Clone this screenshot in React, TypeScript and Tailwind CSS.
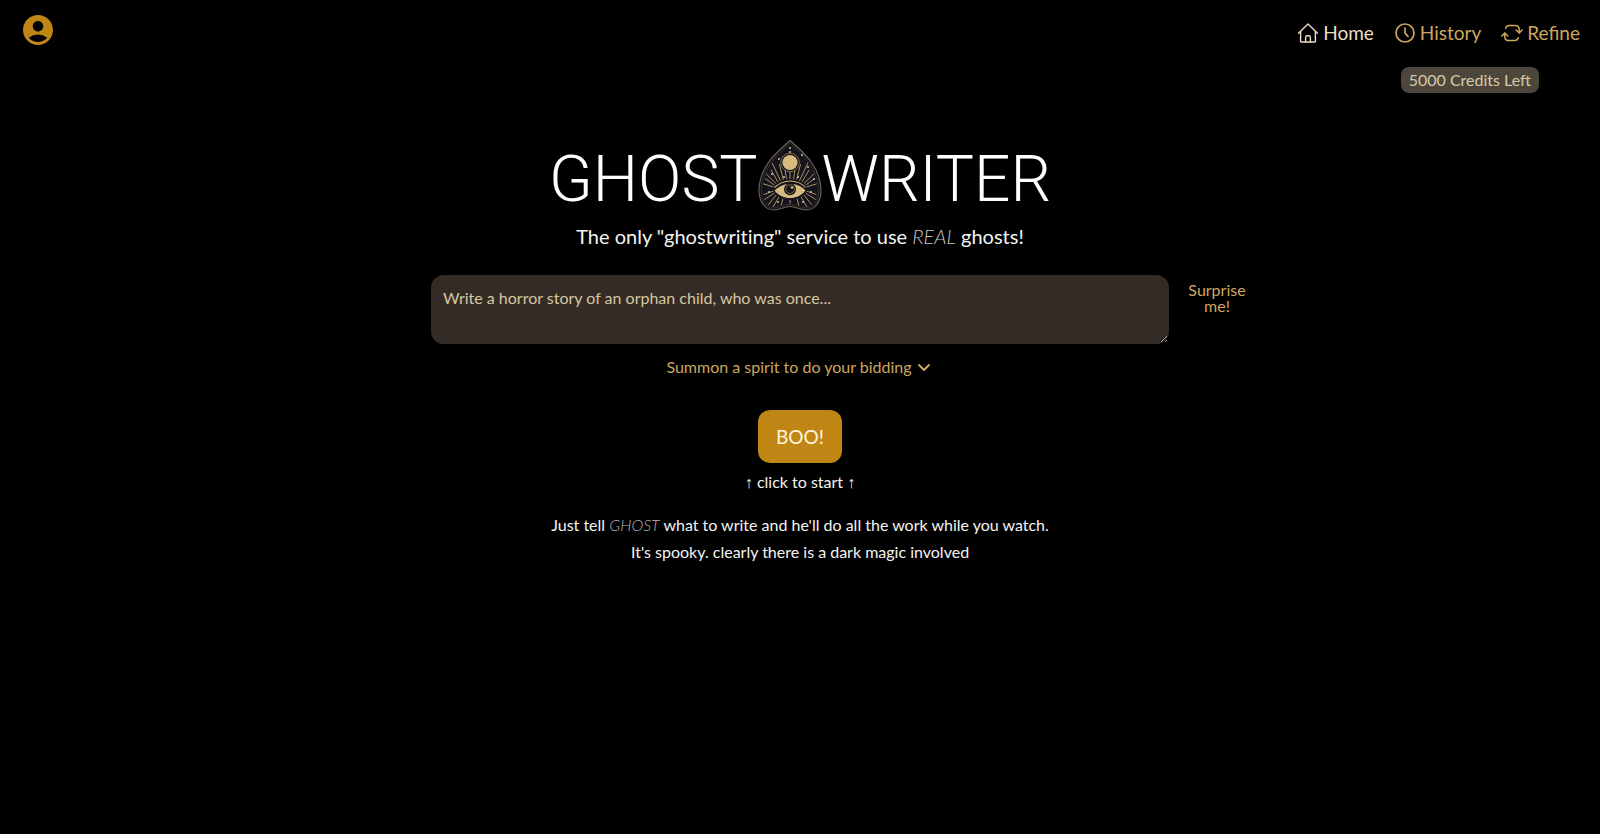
import React from 'react';
import { MdAccountCircle } from 'react-icons/md';

function HomeIcon() {
  return (
    <svg viewBox="0 0 22 22" className="size-[22px]" fill="none" stroke="currentColor" strokeWidth="1.4" strokeLinejoin="round" strokeLinecap="round" aria-hidden="true">
      <path d="M1.5 11.2 11 2l9.5 9.2" />
      <path d="M3.6 9.4v9.8q0 .8.8.8h13.2q.8 0 .8-.8V9.4" />
      <path d="M8.6 20v-4.6q0-1.6 1.6-1.6h1.6q1.6 0 1.6 1.6V20" />
    </svg>
  );
}

function HistoryIcon() {
  return (
    <svg viewBox="0 0 22 22" className="size-[22px]" fill="none" stroke="currentColor" strokeWidth="1.7" strokeLinecap="round" strokeLinejoin="round" aria-hidden="true">
      <circle cx="11" cy="11" r="9" />
      <path d="M11 6v5.2l3 3.2" />
    </svg>
  );
}

function RefineIcon() {
  return (
    <svg viewBox="0 0 22 22" className="size-[22px]" fill="none" stroke="currentColor" strokeWidth="1.5" strokeLinecap="round" strokeLinejoin="round" aria-hidden="true">
      <path d="M4.6 6.2Q5.6 3.4 8.2 3.4h5.8q4.2 0 4.2 4.2v3.2" />
      <path d="m15.2 8 3 3 3-3" />
      <path d="M17.4 15.8q-1 2.8-3.6 2.8H8q-4.2 0-4.2-4.2v-3.2" />
      <path d="m.8 14 3-3 3 3" />
    </svg>
  );
}

const rays = [-168, -157, -146, -135, -124, -113, -102, -90, -78, -67, -56, -45, -34, -23, -12, 12, 24, 36, 50, 66, 90, 114, 130, 144, 156, 168];

const stars: [number, number][] = [[32, 9], [14, 35], [50, 28], [26, 38], [40, 38], [21, 20], [44, 16], [11, 53], [53, 53], [20, 63], [45, 63], [56, 40], [32, 13]];

function Planchette() {
  return (
    <svg viewBox="0 0 64 74" className="h-[74px] w-16 shrink-0" fill="none" aria-hidden="true">
      <defs>
        <clipPath id="board">
          <path d="M32 6C24 13 5 28 4.500 51c0 10 5 17 11.500 17 5.500 0 10-3.500 16-3.500S42.500 68 48 68c6.500 0 11.500-7 11.500-17C59 28 40 13 32 6Z" />
        </clipPath>
      </defs>
      <path
        d="M32 1.500C23 10 1.500 25 1 51c0 12 6 20 15 20 6 0 10-3.500 16-3.500S42 71 48 71c9 0 15-8 15-20C62.500 25 41 10 32 1.500Z"
        fill="#15131b" stroke="#6f6656" strokeWidth="1.1"
      />
      <path d="M32 4C24 12 4 27 3.300 51c0 11 5.200 18 12.700 18 5.500 0 10-3.500 16-3.500S42.500 69 48 69c7.500 0 12.700-7 12.700-18C60 27 40 12 32 4Z" stroke="#4d4639" strokeWidth=".5" />
      <g clipPath="url(#board)">
        {rays.map((angle, i) => {
          const a = (angle * Math.PI) / 180;
          const end = i % 2 ? 27 : 33;
          return (
            <line
              key={angle}
              x1={32 + Math.cos(a) * 17} y1={50 + Math.sin(a) * 10}
              x2={32 + Math.cos(a) * end} y2={50 + Math.sin(a) * end}
              stroke="#a89263" strokeWidth="1"
            />
          );
        })}
      </g>
      <circle cx="32" cy="23.5" r="9.3" fill="#15131b" stroke="#a89263" strokeWidth=".7" />
      <circle cx="32" cy="23.5" r="7.6" fill="#d8bb80" />
      {stars.map(([x, y]) => (
        <circle key={`${x}-${y}`} cx={x} cy={y} r=".9" fill="#d8cfb8" />
      ))}
      <path d="M15 51C21 43 26 41 32 41s12 2 17 10c-5 7-11 10-17 10S20 58 15 51Z" fill="#15131b" />
      <path d="M16.500 48.500C22 43.500 26 42 32 42s11 1.500 15.500 6.500" stroke="#d3b575" strokeWidth="1.1" />
      <path d="M16.500 51.500C22 46.500 26 45 32 45s11 1.500 15.500 6.500C43 57 38 59 32 59s-11-2-15.500-7.500Z" fill="#d8bb80" />
      <circle cx="32" cy="50.2" r="6" fill="#15131b" />
      <circle cx="32" cy="50.2" r="4.3" stroke="#a89263" strokeWidth=".7" />
      <circle cx="34" cy="48.5" r="1.3" fill="#dcbc7c" />
    </svg>
  );
}

export default function App() {
  return (
    <div className="min-h-screen bg-black font-['Lato',sans-serif] text-base text-[#f4f4f2]">
      <header className="flex items-start justify-between px-5 pt-3">
        <button type="button" aria-label="Account" className="text-[#bf8616]">
          <MdAccountCircle className="size-9" />
        </button>
        <div className="flex flex-col items-end">
          <nav className="flex gap-5 pt-[9px] text-[19px] leading-6 text-[#cda65f]">
            <a href="#home" className="flex items-center gap-1 text-[#e9dfc0]"><HomeIcon />Home</a>
            <a href="#history" className="flex items-center gap-1"><HistoryIcon />History</a>
            <a href="#refine" className="flex items-center gap-1"><RefineIcon />Refine</a>
          </nav>
          <p className="mt-[22px] mr-[41px] rounded-lg bg-[#4d463d] px-2 py-px text-base leading-6 text-[#d8c9a4]">5000 Credits Left</p>
        </div>
      </header>

      <main className="mt-11 flex flex-col items-center text-center">
        <h1 className="flex items-center font-['Roboto',sans-serif] text-[64px] leading-[70px] font-light text-white">
          <span className="pt-2">GHOST</span>
          <Planchette />
          <span className="pt-2">WRITER</span>
        </h1>
        <p className="mt-[5px] text-xl leading-8 [font-variant-ligatures:none]">
          The only "ghostwriting" service to use <em className="font-light text-[#c4c4c4]">REAL</em> ghosts!
        </p>

        <div className="mt-[23px] grid w-full grid-cols-[1fr_minmax(0,738px)_1fr] items-start">
          <textarea
            aria-label="Story prompt"
            placeholder="Write a horror story of an orphan child, who was once..."
            className="col-start-2 block h-[69px] resize rounded-xl border border-[#2e2c27] bg-[#342b26] px-[11px] py-[10px] leading-6 text-[#e6d5ae] placeholder:text-[#d6c6a0]"
          />
          <button type="button" className="ml-4 mt-[7px] w-16 leading-4 text-[#cda65f]">Surprise me!</button>
        </div>

        <button type="button" className="mt-[11px] flex items-center gap-0.5 leading-6 text-[#cda65f]">
          Summon a spirit to do your bidding
          <svg viewBox="0 0 20 20" className="size-5" fill="none" stroke="currentColor" strokeWidth="1.9" strokeLinecap="round" strokeLinejoin="round" aria-hidden="true">
            <path d="m5 8 5 5 5-5" />
          </svg>
        </button>

        <button type="button" className="mt-[31px] rounded-xl bg-[#bf8616] px-[18px] py-3 text-[19px] leading-[29px] text-[#fff6dc]">BOO!</button>
        <p className="mt-[7px] leading-6">
          <span className="font-['Liberation_Sans',sans-serif]">↑</span> click to start <span className="font-['Liberation_Sans',sans-serif]">↑</span>
        </p>
        <div className="mt-4 leading-[27px]">
          <p>Just tell <em className="font-light text-[#b4b4b4]">GHOST</em> what to write and he'll do all the work while you watch.</p>
          <p>It's spooky. clearly there is a dark magic involved</p>
        </div>
      </main>
    </div>
  );
}
